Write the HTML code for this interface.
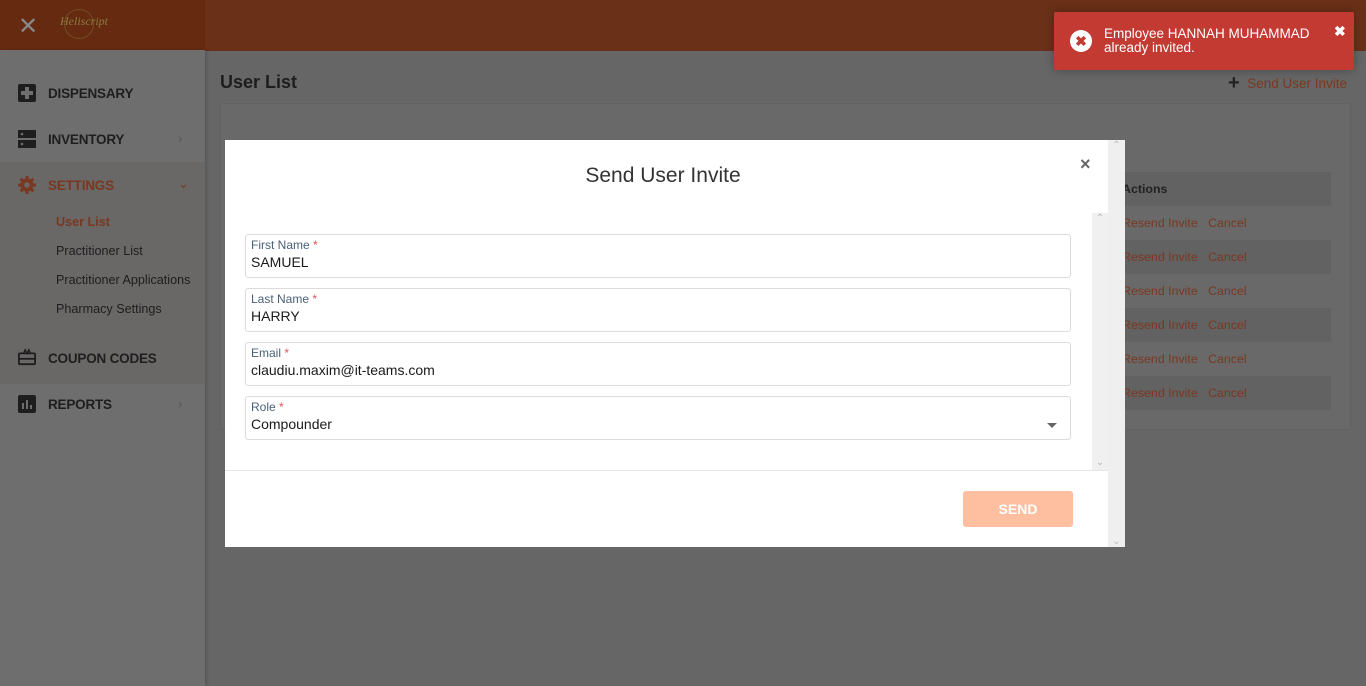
<!DOCTYPE html>
<html><head><meta charset="utf-8"><style>
*{box-sizing:border-box;margin:0;padding:0}
body{width:1366px;height:686px;overflow:hidden;background:#666;font-family:"Liberation Sans",Arial,sans-serif;position:relative}
.hdr{position:absolute;left:0;top:0;width:1366px;height:51px;background:#6b3018}
.hdrl{position:absolute;left:0;top:0;width:205px;height:50px;background:#652a10}
.side{position:absolute;left:0;top:50px;width:205px;height:636px;background:#6e6e6e;box-shadow:2px 0 3px rgba(0,0,0,.15)}
.nav{position:absolute;left:48px;font-weight:bold;font-size:13.5px;color:#1e1e1e;letter-spacing:-0.2px}
.ico{position:absolute;left:18px;width:18px;height:18px}
.sub{position:absolute;left:56px;font-size:12.6px;color:#1e1e1e}
.chev{position:absolute;left:178px;color:#555;font-size:13px}
.card{position:absolute;left:220px;top:103px;width:1131px;height:327px;background:#696969;border:1px solid #626262}
.row{position:absolute;left:1090px;width:241px;height:34px;font-size:12.4px;color:#7a3820;line-height:34px}
.modal{position:absolute;left:225px;top:140px;width:900px;height:407px;background:#fff}
.fld{position:absolute;left:20px;width:826px;height:44px;border:1px solid #dcdcdc;border-radius:3px}
.fld .l{position:absolute;left:5px;top:3px;font-size:12px;color:#4a6078}
.fld .l b{color:#e05555;font-weight:normal}
.fld .v{position:absolute;left:5px;top:19px;font-size:14px;color:#1a1a1a}
</style></head><body>
<div class="hdr"></div><div class="hdrl"></div>
<div style="position:absolute;left:18px;top:12px;color:#888;font-size:24px">✕</div>
<div style="position:absolute;left:64px;top:9px;width:30px;height:30px;border:1px solid #7a6530;border-radius:50%;opacity:.6"></div>
<div style="position:absolute;left:60px;top:14px;font-family:'Liberation Serif',serif;font-style:italic;color:#8a7a40;font-size:12px">Heliscript</div>
<div class="side">
<div style="position:absolute;left:0;top:112px;width:205px;height:222px;background:#6a6767"></div>
</div>
<svg class="ico" style="top:84px" viewBox="0 0 18 18"><rect width="18" height="18" rx="2" fill="#1e1e1e"/><path d="M7 3h4v4h4v4h-4v4H7v-4H3V7h4z" fill="#6e6e6e"/></svg>
<div class="nav" style="top:86px">DISPENSARY</div>
<svg class="ico" style="top:130px" viewBox="0 0 18 18"><rect y="0" width="18" height="8" fill="#1e1e1e"/><rect y="10" width="18" height="8" fill="#1e1e1e"/><circle cx="4" cy="4" r="1.3" fill="#6e6e6e"/><circle cx="4" cy="14" r="1.3" fill="#6e6e6e"/></svg>
<div class="nav" style="top:132px">INVENTORY</div><div class="chev" style="top:131px">›</div>
<svg class="ico" style="top:176px" viewBox="0 0 18 18"><g fill="#7a3820"><circle cx="9" cy="9" r="6.5"/><rect x="7.5" y="0" width="3" height="18"/><rect y="7.5" x="0" width="18" height="3"/><rect x="7.5" y="0" width="3" height="18" transform="rotate(45 9 9)"/><rect x="7.5" y="0" width="3" height="18" transform="rotate(-45 9 9)"/></g><circle cx="9" cy="9" r="2.8" fill="#6a6767"/></svg>
<div class="nav" style="top:178px;color:#7a3820">SETTINGS</div><div class="chev" style="top:176px;color:#7a3820">⌄</div>
<div class="sub" style="top:215px;color:#7a3820;font-weight:bold">User List</div>
<div class="sub" style="top:244px">Practitioner List</div>
<div class="sub" style="top:273px">Practitioner Applications</div>
<div class="sub" style="top:302px">Pharmacy Settings</div>
<svg class="ico" style="top:348px;width:20px;left:17px" viewBox="0 0 20 20"><rect x="1" y="6" width="18" height="12" rx="1" fill="none" stroke="#1e1e1e" stroke-width="2"/><rect x="1" y="11" width="18" height="2" fill="#1e1e1e"/><path d="M6 6l2-4 2 4 2-4 2 4" fill="none" stroke="#1e1e1e" stroke-width="1.6"/></svg>
<div class="nav" style="top:351px">COUPON CODES</div>
<svg class="ico" style="top:395px" viewBox="0 0 18 18"><rect width="18" height="18" rx="2" fill="#1e1e1e"/><rect x="4" y="8" width="2" height="6" fill="#6e6e6e"/><rect x="8" y="5" width="2" height="9" fill="#6e6e6e"/><rect x="12" y="10" width="2" height="4" fill="#6e6e6e"/></svg>
<div class="nav" style="top:397px">REPORTS</div><div class="chev" style="top:396px">›</div>
<div style="position:absolute;left:220px;top:72px;font-size:18px;font-weight:bold;color:#1e1e1e">User List</div>
<div style="position:absolute;left:1228px;top:71px;font-size:13.5px;color:#7a3820"><span style="color:#222;font-size:20px;font-weight:bold;position:relative;top:1px">+</span>&nbsp; Send User Invite</div>
<div class="card"></div>
<div class="row" style="top:172px;background:#626262;color:#222;font-weight:bold;padding-left:32px">Actions</div>
<div class="row" style="top:206px;padding-left:32px">Resend Invite &nbsp; Cancel</div>
<div class="row" style="top:240px;background:#626262;padding-left:32px">Resend Invite &nbsp; Cancel</div>
<div class="row" style="top:274px;padding-left:32px">Resend Invite &nbsp; Cancel</div>
<div class="row" style="top:308px;background:#626262;padding-left:32px">Resend Invite &nbsp; Cancel</div>
<div class="row" style="top:342px;padding-left:32px">Resend Invite &nbsp; Cancel</div>
<div class="row" style="top:376px;background:#626262;padding-left:32px">Resend Invite &nbsp; Cancel</div>
<div class="modal">
<div style="position:absolute;left:0;width:876px;top:24px;text-align:center;font-size:21px;color:#333">Send User Invite</div>
<div style="position:absolute;left:855px;top:14px;font-size:18px;font-weight:bold;color:#666">×</div>
<div style="position:absolute;right:0;top:0;width:17px;height:407px;background:#efefef;color:#bbb;font-size:10px;text-align:center">⌃<div style="position:absolute;bottom:0;width:17px">⌄</div></div>
<div style="position:absolute;left:867px;top:73px;width:16px;height:257px;background:#f0f0f0;color:#bbb;font-size:10px;text-align:center">⌃<div style="position:absolute;bottom:2px;width:16px">⌄</div></div>
<div class="fld" style="top:94px"><div class="l">First Name <b>*</b></div><div class="v">SAMUEL</div></div>
<div class="fld" style="top:148px"><div class="l">Last Name <b>*</b></div><div class="v">HARRY</div></div>
<div class="fld" style="top:202px"><div class="l">Email <b>*</b></div><div class="v">claudiu.maxim@it-teams.com</div></div>
<div class="fld" style="top:256px"><div class="l">Role <b>*</b></div><div class="v">Compounder</div>
<div style="position:absolute;right:13px;top:26px;width:0;height:0;border-left:5px solid transparent;border-right:5px solid transparent;border-top:5px solid #666"></div></div>
<div style="position:absolute;left:0;top:330px;width:883px;height:1px;background:#e5e8ea"></div>
<div style="position:absolute;left:738px;top:351px;width:110px;height:36px;background:#fdbf9f;border-radius:3px;color:#fff;font-weight:bold;font-size:14px;text-align:center;line-height:36px">SEND</div>
</div>
<div style="position:absolute;left:1054px;top:12px;width:300px;height:58px;background:#c33a33;border-radius:2px;box-shadow:0 0 10px rgba(0,0,0,.3)">
<div style="position:absolute;left:16px;top:18px;width:22px;height:22px;border-radius:50%;background:#fff;color:#c33a33;font-weight:bold;font-size:14px;text-align:center;line-height:22px">✖</div>
<div style="position:absolute;left:50px;top:15px;color:#fff;font-size:13.5px;line-height:14px">Employee HANNAH MUHAMMAD<br>already invited.</div>
<div style="position:absolute;left:280px;top:11px;color:#fff;font-size:14px;font-weight:bold">✖</div>
</div>
</body></html>
